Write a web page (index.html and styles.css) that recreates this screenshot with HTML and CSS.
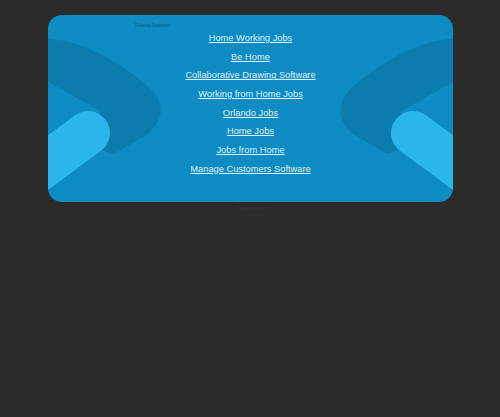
FILE: index.html
```html
<!DOCTYPE html>
<html>
<head>
<meta charset="utf-8">
<link rel="stylesheet" href="styles.css">
</head>
<body>
<div class="card">
  <svg class="deco" viewBox="0 0 405 187" preserveAspectRatio="none" aria-hidden="true">
    <g class="side">
      <path class="dark" d="M -10 23 C 30 23 62 42 90 63 Q 130 92 100 119 L 66 139 L 40 130 L 52 96 L 0 67 L -10 67 Z"/>
      <line class="light" x1="40" y1="118" x2="-22" y2="164"/>
    </g>
    <g class="side" transform="translate(405 0) scale(-1 1)">
      <path class="dark" d="M -10 23 C 30 23 62 42 90 63 Q 130 92 100 119 L 66 139 L 40 130 L 52 96 L 0 67 L -10 67 Z"/>
      <line class="light" x1="40" y1="118" x2="-22" y2="164"/>
    </g>
  </svg>
  <div class="content">
    <div class="label">Related Searches</div>
    <ul class="links">
      <li><a href="#">Home Working Jobs</a></li>
      <li><a href="#">Be Home</a></li>
      <li><a href="#">Collaborative Drawing Software</a></li>
      <li><a href="#">Working from Home Jobs</a></li>
      <li><a href="#">Orlando Jobs</a></li>
      <li><a href="#">Home Jobs</a></li>
      <li><a href="#">Jobs from Home</a></li>
      <li><a href="#">Manage Customers Software</a></li>
    </ul>
  </div>
</div>
<div class="footer">Privacy Policy</div>
</body>
</html>
```
FILE: styles.css
```css
html, body {
  margin: 0;
  padding: 0;
  background: #2b2b2b;
  font-family: "Liberation Sans", Arial, sans-serif;
}
.card {
  position: relative;
  width: 405px;
  height: 187px;
  margin: 15px 0 0 48px;
  border-radius: 14px;
  background: #0c8cc2;
  overflow: hidden;
}
.deco {
  position: absolute;
  left: 0;
  top: 0;
  width: 100%;
  height: 100%;
}
.dark {
  fill: #0a7cae;
}
.light {
  stroke: #2bb5ea;
  stroke-width: 44;
  stroke-linecap: round;
}
.content {
  position: relative;
  padding-top: 8px;
}
.label {
  margin-left: 87px;
  font-size: 4.5px;
  line-height: 6px;
  height: 6px;
  color: #0a5f86;
}
.links {
  list-style: none;
  margin: 0;
  padding: 0;
  text-align: center;
}
.links li {
  line-height: 18.7px;
  height: 18.7px;
  font-size: 9.3px;
}
.links a {
  color: #dff1fa;
  text-decoration: underline;
}
.footer {
  margin-top: 3px;
  text-align: center;
  padding-left: 2px;
  font-size: 5px;
  line-height: 6px;
  color: #383838;
}
```
